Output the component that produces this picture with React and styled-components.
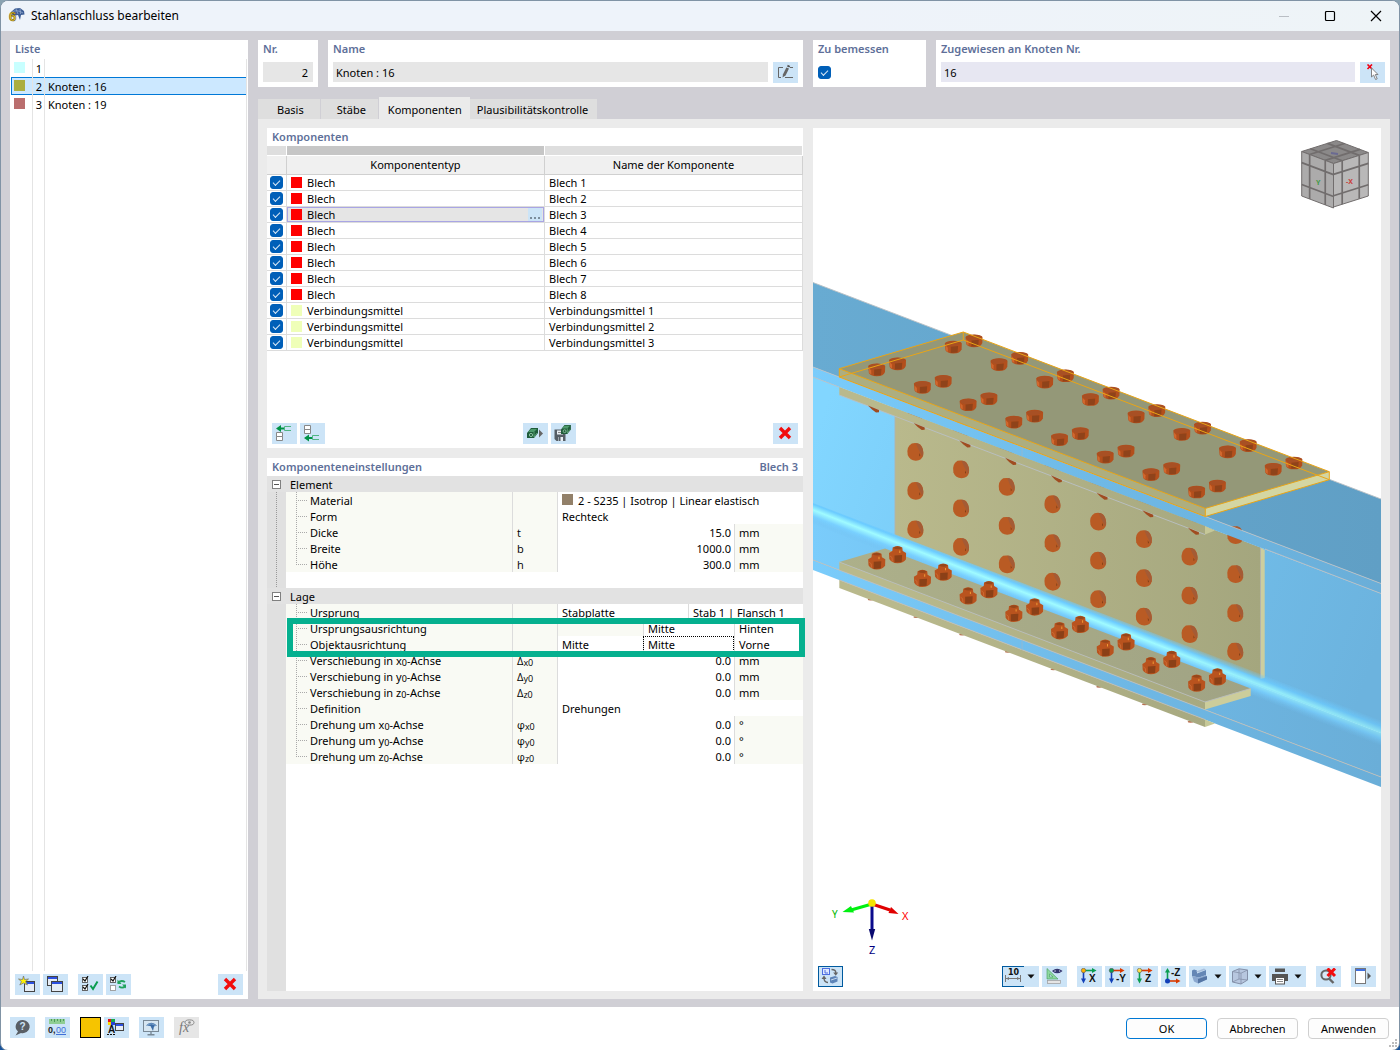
import React from 'react';
import styled, { createGlobalStyle, css } from 'styled-components';

const COMPONENTS = [
  { type: 'Blech', name: 'Blech 1', color: '#ff0000' },
  { type: 'Blech', name: 'Blech 2', color: '#ff0000' },
  { type: 'Blech', name: 'Blech 3', color: '#ff0000' },
  { type: 'Blech', name: 'Blech 4', color: '#ff0000' },
  { type: 'Blech', name: 'Blech 5', color: '#ff0000' },
  { type: 'Blech', name: 'Blech 6', color: '#ff0000' },
  { type: 'Blech', name: 'Blech 7', color: '#ff0000' },
  { type: 'Blech', name: 'Blech 8', color: '#ff0000' },
  { type: 'Verbindungsmittel', name: 'Verbindungsmittel 1', color: '#efffb8' },
  { type: 'Verbindungsmittel', name: 'Verbindungsmittel 2', color: '#efffb8' },
  { type: 'Verbindungsmittel', name: 'Verbindungsmittel 3', color: '#efffb8' },
];

const JOINTS = [
  { nr: 1, name: '', color: '#c8ffff' },
  { nr: 2, name: 'Knoten : 16', color: '#abae40' },
  { nr: 3, name: 'Knoten : 19', color: '#ba6e6e' },
];

const TABS = ['Basis', 'Stäbe', 'Komponenten', 'Plausibilitätskontrolle'];

const BOLTS = [0, 1, 2, 3, 4, 5, 6, 7];

/* ---------- icons ---------- */

const Svg = ({ w = 21, h = 17, children }) => (
  <svg width={w} height={h} viewBox={`0 0 ${w} ${h}`} aria-hidden="true">{children}</svg>
);

const AppIcon = () => (
  <Svg w={17} h={18}>
    <path d="M3 5 L7 1.5 L12 1 L16 4 L16.5 7.5 L13 8 L12 13 L10 8 L5 9 Z" fill="#3d5d96" />
    <path d="M4 5 Q9 2 15 6 M8 2 L10 7 M12 1.5 L12.5 7" stroke="#9fb4d6" strokeWidth="0.7" fill="none" />
    <text x="1" y="14" fontSize="13" fontWeight="bold" fontFamily="Liberation Sans, sans-serif" fill="#f6cf2c" stroke="#6b5b14" strokeWidth="0.6">6</text>
  </Svg>
);

const EditIcon = () => (
  <Svg>
    <path d="M8 3.5 H3.5 V13.5 H6 M10 13.5 H18 M15 3.5 H18" stroke="#666" fill="none" />
    <path d="M7.5 13.5 L8 10.2 L11.4 3.4 L14 4.6 L10.6 11.4 Z" fill="#666" />
    <path d="M12 2.4 L12.8 0.8 L15.2 2 L14.4 3.6 Z" fill="#555" />
  </Svg>
);

const PickIcon = () => (
  <Svg>
    <path d="M5.5 0.5 L10 5 M10 0.5 L5.5 5" stroke="#f00012" strokeWidth="1.6" />
    <path d="M9.5 4 V13 L11.6 11 L13.6 15.5 L15.2 14.8 L13.3 10.5 H16 Z" fill="#fff" stroke="#777" strokeWidth="0.9" />
  </Svg>
);

const InsertIcon = ({ below }) => (
  <Svg>
    {below ? (
      <g>
        <path d="M2.5 0.5 h6 v4 h-6 z M2.5 4.5 h6 v4 h-6 z" fill="#fff" stroke="#888" />
        <path d="M2 13 L7 9.5 V12 H10 V14 H7 V16.5 Z" fill="#009245" />
        <path d="M17 10.5 H10.5 V14.5 H17" fill="none" stroke="#50b583" />
      </g>
    ) : (
      <g>
        <path d="M2.5 7.5 h6 v4 h-6 z M2.5 11.5 h6 v4 h-6 z" fill="#fff" stroke="#888" />
        <path d="M2 3.5 L7 0 V2.5 H10 V4.5 H7 V7 Z" fill="#009245" />
        <path d="M17 1.5 H10.5 V5.5 H17" fill="none" stroke="#50b583" />
      </g>
    )}
  </Svg>
);

const Chip = ({ x, y }) => (
  <g transform={`translate(${x} ${y})`}>
    <path d="M0 6 L4 1 L11 1 L11 6 L7 11 L0 11 Z" fill="#1f5c3a" />
    <path d="M1 5 L4 2 L10 2 L7 5 Z" fill="#4d9a6c" />
    <circle cx="4" cy="8" r="1.6" fill="none" stroke="#a6d8b8" strokeWidth="0.8" />
    <path d="M7 5 V10 L10 6" stroke="#6fb98b" strokeWidth="0.7" fill="none" />
  </g>
);

const LoadIcon = () => (
  <Svg>
    <Chip x={2} y={2} />
    <path d="M14 4.5 L18 8.5 L14 12.5 Z" fill="#666" />
  </Svg>
);

const SaveIcon = () => (
  <Svg>
    <path d="M1.5 4.5 H12.5 V16 H3.5 L1.5 14 Z" fill="#555e66" />
    <path d="M4 5.5 h6 v4 h-6 z" fill="#e8eef4" />
    <path d="M5 7.5 h4" stroke="#888" />
    <path d="M5 12 h5 v4 h-5 z" fill="#e8eef4" />
    <path d="M5.5 12 h2 v4 h-2 z" fill="#555e66" />
    <g transform="translate(8 -1) scale(0.9)"><Chip x={0} y={0} /></g>
  </Svg>
);

const DeleteIcon = () => (
  <Svg>
    <path d="M5 3 L15 13 M15 3 L5 13" stroke="#f20d0d" strokeWidth="3.4" />
  </Svg>
);

const MiniWindow = ({ x, y, w = 10, h = 9 }) => (
  <g>
    <rect x={x + 0.5} y={y + 0.5} width={w} height={h} fill="#e6edf5" stroke="#444" />
    <rect x={x + 1} y={y + 1} width={w - 1} height="2" fill="#2c50e0" />
  </g>
);

const NewIcon = () => (
  <Svg>
    <MiniWindow x={7} y={5} w={10} h={10} />
    <path d="M6.5 0 L7.5 3.5 L11.5 3 L8.6 5.5 L10.5 9 L6.5 7 L2.8 9 L4.4 5.5 L1.5 3 L5.5 3.5 Z" fill="#fff200" stroke="#777" strokeWidth="0.8" />
  </Svg>
);

const CopyIcon = () => (
  <Svg>
    <MiniWindow x={2} y={0} w={10} h={9} />
    <MiniWindow x={6} y={5} w={11} h={10} />
  </Svg>
);

const TickBox = ({ y, on = true }) => (
  <g>
    <rect x="2.5" y={y + 0.5} width="5" height="5" fill="#fff" stroke={on ? '#555' : '#999'} strokeWidth="0.9" />
    {on && <path d={`M3 ${y + 2} l2 2 l3 -5`} stroke="#111" fill="none" strokeWidth="1.2" />}
  </g>
);

const CheckAllIcon = () => (
  <Svg>
    <TickBox y={1} />
    <TickBox y={9} />
    <path d="M10.5 9.5 L13 13 L17.5 5.5" fill="none" stroke="#0a9d50" strokeWidth="2" />
  </Svg>
);

const CheckInvertIcon = () => (
  <Svg>
    <TickBox y={1} />
    <TickBox y={9} on={false} />
    <path d="M10 7 Q13 3.5 17 6 M17.5 10 Q14.5 13 11 10.5" fill="none" stroke="#1fa35c" strokeWidth="1.8" />
    <path d="M9.5 3.5 V8 H13.5 Z M18 12.5 V8.5 H14 Z" fill="#1fa35c" />
  </Svg>
);

const HelpIcon = () => (
  <Svg>
    <path d="M11 1 A7 6.6 0 1 1 9 14 L3.5 16.5 L6 12.5 A7 6.6 0 0 1 11 1 Z" fill="#595f66" />
    <text x="7.6" y="11.4" fontSize="10" fontWeight="bold" fontFamily="Liberation Sans, sans-serif" fill="#cce4f7">?</text>
  </Svg>
);

const DigitsIcon = () => (
  <Svg>
    <rect x="2" y="0" width="16" height="5" fill="#8fce93" />
    <path d="M4.5 0 v2 M7.5 0 v3 M10.5 0 v2 M13.5 0 v3 M16.5 0 v2" stroke="#3d8f4a" strokeWidth="0.8" />
    <text x="1" y="14" fontSize="9" fontWeight="bold" fontFamily="Liberation Sans, sans-serif" fill="#222">0,</text>
    <text x="9" y="14" fontSize="9" fontFamily="Liberation Sans, sans-serif" fill="#3f6fd8">00</text>
    <path d="M9 15.5 h10" stroke="#3f6fd8" />
  </Svg>
);

const DisplayIcon = () => (
  <Svg>
    <rect x="2" y="0" width="3" height="3" fill="#e3131b" />
    <rect x="5" y="0" width="4" height="3" fill="#19a84a" />
    <rect x="2" y="3" width="3" height="3" fill="#ffd900" />
    <rect x="5" y="3" width="4" height="3" fill="#2740d8" />
    <text x="2" y="14" fontSize="10" fontWeight="bold" fontFamily="Liberation Sans, sans-serif" fill="#111">A</text>
    <path d="M1 15.5 h9" stroke="#111" strokeDasharray="2 1" />
    <MiniWindow x={9} y={4} w={8} h={7} />
  </Svg>
);

const MonitorIcon = () => (
  <Svg>
    <rect x="2.5" y="1.5" width="15" height="11" fill="#d6e6f2" stroke="#788896" />
    <path d="M5 6.5 Q10 1 16 6.5 L13 7.5 L12 12 L9.5 7 Z" fill="#3c6ca6" />
    <path d="M6 6.5 Q10.5 3 15 7" stroke="#9cc0e0" strokeWidth="0.7" fill="none" />
    <path d="M10 13 v2.5 M6.5 15.8 h7" stroke="#788896" strokeWidth="1.4" />
  </Svg>
);

const FxIcon = () => (
  <Svg>
    <text x="3" y="13" fontSize="14" fontStyle="italic" fontFamily="Liberation Serif, serif" fill="#777">fx</text>
    <ellipse cx="13.5" cy="3.5" rx="4.5" ry="2.6" fill="none" stroke="#888" />
    <circle cx="13.5" cy="3.5" r="1.3" fill="#888" />
  </Svg>
);

const SyncViewIcon = () => (
  <Svg>
    <rect x="2.5" y="0.5" width="7" height="6" fill="#dfe9ff" stroke="#4d6fe0" />
    <path d="M5 2 v3 h3" stroke="#4d6fe0" fill="none" />
    <path d="M11.5 1.5 Q16 1.5 15.8 5 M4 10 Q4 14.5 8 14.5" stroke="#666" fill="none" strokeWidth="1.4" />
    <path d="M13.2 4.5 h5 l-2.5 3.2 z M1.5 11 h5 l-2.5 -3.4 z" fill="#666" />
    <path d="M10 9.5 l5 -1.5 l2.5 1 v4.5 l-5 2 l-2.5 -1 z" fill="#5d84b8" />
    <path d="M11 12 l6 -2" stroke="#c3d7ee" />
  </Svg>
);

const DimensionIcon = () => (
  <Svg>
    <text x="5" y="7" fontSize="8" fontWeight="bold" fontFamily="DejaVu Sans, sans-serif" fill="#111">10</text>
    <path d="M2.5 7 v7 M17.5 7 v7 M3 10.5 h14" stroke="#777" />
    <path d="M3 10.5 l3 -1.6 v3.2 z M17 10.5 l-3 -1.6 v3.2 z" fill="#777" />
  </Svg>
);

const RulerEyeIcon = () => (
  <Svg>
    <path d="M3 0.5 L14 11 H3 Z M5.5 6 V9 H9 Z" fill="#8fd8a0" fillRule="evenodd" stroke="#3f9b5b" strokeWidth="0.6" />
    <rect x="3.5" y="12.5" width="13" height="3" fill="#e5e5e5" stroke="#999" strokeWidth="0.7" />
    <path d="M9 3 Q13 -0.5 17.5 3 Q13 6.5 9 3 Z" fill="#fff" stroke="#33346e" strokeWidth="1.2" />
    <circle cx="13.3" cy="3" r="2" fill="#33346e" />
  </Svg>
);

const AxisIcon = ({ label, dot, right, down, up }) => (
  <Svg>
    {up ? (
      <g>
        <path d="M4.5 12 V4" stroke="#0a9d50" strokeWidth="1.6" />
        <path d="M2 4.5 L4.5 0 L7 4.5 Z" fill="#0a9d50" />
        <path d="M5 13 H14" stroke="#d93a00" strokeWidth="1.6" />
        <path d="M13 10.5 L17.5 13 L13 15.5 Z" fill="#d93a00" />
        <circle cx="4.5" cy="13" r="2.5" fill={dot} />
        <text x="8" y="8" fontSize="10" fontWeight="bold" fontFamily="Liberation Sans, sans-serif" fill="#111">{label}</text>
      </g>
    ) : (
      <g>
        <path d="M5 2.5 H14" stroke={right} strokeWidth="1.6" />
        <path d="M13 0 L17.5 2.5 L13 5 Z" fill={right} />
        <path d="M4.5 4 V12" stroke={down} strokeWidth="1.6" />
        <path d="M2 10.5 L4.5 15.5 L7 10.5 Z" fill={down} />
        <circle cx="4.5" cy="2.5" r="2.2" fill={dot} stroke="#555" strokeWidth="0.6" />
        <text x={label.length > 1 ? 9 : 10} y="14" fontSize="10" fontWeight="bold" fontFamily="Liberation Sans, sans-serif" fill="#111">{label}</text>
      </g>
    )}
  </Svg>
);

const SolidIcon = () => (
  <Svg w={18}>
    <path d="M1 2.5 L3 1.5 L6 2.5 V5.5 L15 2 V7 L8 9.5 L1 8 Z" fill="#6487b5" />
    <path d="M5 3.5 L13 0.5 L15 1.5 L7 4.5 Z" fill="#a8bfdc" />
    <path d="M1 8 L8 9.5 L15 7 L16 11 L7 15.5 L3 13.5 Z" fill="#8ba8cf" />
    <path d="M7 11 L16 8 V11.5 L7 15.5 Z" fill="#5576a5" />
  </Svg>
);

const WireCubeIcon = () => (
  <Svg w={18}>
    <path d="M1.5 3.5 L8 0.8 L16.5 2 V12 L10 16 L1.5 14 Z" fill="#b7c7df" stroke="#8490a8" />
    <path d="M1.5 3.5 L10 5.2 L16.5 2 M10 5.2 V16 M8 1 V11 L1.5 14 M8 11 L16.5 12" stroke="#8490a8" fill="none" strokeWidth="0.8" />
  </Svg>
);

const PrinterIcon = () => (
  <Svg w={18}>
    <path d="M4 0.5 h10 v3.5 h-10 z M1 6 h16 v7 h-3 v-3 h-10 v3 h-3 z" fill="#555" />
    <rect x="4.5" y="9.5" width="9" height="6.5" fill="#fff" stroke="#555" />
    <path d="M6 11.5 h6 M6 13.5 h6" stroke="#888" />
  </Svg>
);

const ZoomResetIcon = () => (
  <Svg>
    <circle cx="8" cy="7" r="4.6" fill="#d6e8f7" stroke="#666" strokeWidth="2" />
    <path d="M11 10.5 L15.5 15" stroke="#666" strokeWidth="2.4" />
    <path d="M9.5 0.5 L17 8 M17 0.5 L9.5 8" stroke="#f20d0d" strokeWidth="3" />
  </Svg>
);

const PanelIcon = () => (
  <Svg>
    <rect x="2.5" y="0.5" width="10" height="15" fill="#fff" stroke="#777" />
    <rect x="3" y="1" width="9" height="2" fill="#3f6fe0" />
    <path d="M14.5 4.5 L18 8 L14.5 11.5 Z" fill="#555" />
  </Svg>
);

const Caret = () => (
  <Svg w={8} h={5}><path d="M0.5 0.5 H7.5 L4 4.5 Z" fill="#111" /></Svg>
);

const Grip = () => (
  <Svg w={10} h={10}>
    <path d="M7 0 h2 v2 h-2 z M4 3 h2 v2 h-2 z M7 3 h2 v2 h-2 z M1 6 h2 v2 h-2 z M4 6 h2 v2 h-2 z M7 6 h2 v2 h-2 z" fill="#bcbcbc" />
  </Svg>
);

/* ---------- 3D view ---------- */

const TopBolt = ({ x, y }) => (
  <g transform={`translate(${x} ${y})`}>
    <path d="M-8.5 -4 Q-7 -6.5 0 -6.5 Q7 -6.5 8.5 -4 L8.3 2 Q7 6.2 0 6.2 Q-6.5 6 -7.8 3 Z" fill="#b34f1c" />
    <path d="M-8 -4 Q0 -8 8 -4.5 Q4 -1 -2 -0.5 Q-7 -1 -8 -4 Z" fill="#a85024" />
    <path d="M-2.5 -0.5 L4.8 -1.2 L4.2 5.2 L-2.6 5.6 Z" fill="#8f431a" />
    <path d="M-7.8 -2 L-5.5 0.5 L-5.4 4.6 L-7.6 3 Z" fill="#d2682e" />
  </g>
);

const WebBolt = ({ x, y }) => (
  <g transform={`translate(${x} ${y})`}>
    <path d="M-3.5 -8.6 Q2 -9.8 5 -7.4 Q8.6 -3 8 3 Q6.8 8.6 0.5 8.8 Q-5.5 8.6 -7.6 3 Q-9.2 -5.5 -3.5 -8.6 Z" fill="#b95b24" />
    <path d="M0.5 -8.8 Q5 -9 7 -4 Q9 1 6.8 5 Q6 2 3 -3 Z" fill="#a45b35" />
    <path d="M4 1 L5 3.2 L4.2 4.4 Z" fill="#6e3716" />
  </g>
);

const NutBolt = ({ x, y }) => (
  <g transform={`translate(${x} ${y})`}>
    <path d="M-8.5 -2 L-5.2 -4 L-4.8 -7.5 Q0 -10.5 4.8 -7.5 L5.2 -4 L8.6 -2 L8.4 4.5 Q6 8 0 8.3 Q-6 8 -8.2 4 Z" fill="#b9531e" />
    <path d="M-3 0.5 L4.6 0 L4.2 7 L-3 7.6 Z" fill="#8b4017" />
    <path d="M-4.4 -7 Q0 -9.8 4.4 -7 Q1 -4.5 -4.4 -7 Z" fill="#96471b" />
    <path d="M1.8 -4.5 h1 v2.4 h-1 z" fill="#f09a35" />
    <path d="M-7.5 1 L-5.5 2.5 L-5.2 6.4" stroke="#d06f37" strokeWidth="0.8" fill="none" />
  </g>
);

const step = (x, y, i) => ({ x: x + 45.7 * i, y: y + 17.45 * i });

// point on a parallelogram face, u and v run from 0 to 1
const facePoint = (o, a, b, u, v) => [
  o[0] + (a[0] - o[0]) * u + (b[0] - o[0]) * v,
  o[1] + (a[1] - o[1]) * u + (b[1] - o[1]) * v,
];

const CubeFace = ({ o, a, b, fill }) => {
  const cuts = [0.25, 0.74];
  const far = [a[0] + b[0] - o[0], a[1] + b[1] - o[1]];
  const lines = cuts.map((c) => {
    const p = [...facePoint(o, a, b, c, 0), ...facePoint(o, a, b, c, 1)];
    const q = [...facePoint(o, a, b, 0, c), ...facePoint(o, a, b, 1, c)];
    return `M${p[0]} ${p[1]} L${p[2]} ${p[3]} M${q[0]} ${q[1]} L${q[2]} ${q[3]}`;
  });
  return (
    <g stroke="#716d6d" strokeLinejoin="round">
      <polygon points={`${o} ${a} ${far} ${b}`} fill={fill} strokeWidth="1" />
      <path d={lines.join(' ')} strokeWidth="1.7" />
    </g>
  );
};

const ViewCube = () => (
  <g>
    <CubeFace o={[1301.7, 151.5]} a={[1336.5, 140.5]} b={[1333.5, 163.5]} fill="#8b8989" />
    <CubeFace o={[1301.7, 151.5]} a={[1333.5, 163.5]} b={[1301.7, 196]} fill="#acabab" />
    <CubeFace o={[1333.5, 163.5]} a={[1368.3, 152.5]} b={[1333.5, 207]} fill="#b9b8b8" />
    <path d="M1331 153 L1338 154" stroke="#5d5d96" strokeWidth="2" opacity="0.7" />
    <text x="1316" y="185" fontSize="7" fontWeight="bold" fill="#3f9a48">Y</text>
    <text x="1346" y="184" fontSize="7" fontWeight="bold" fill="#c9403b">-X</text>
  </g>
);

const Axes = () => (
  <g>
    <path d="M872 904 L851 910" stroke="#00f010" strokeWidth="3" />
    <path d="M842.5 912 L851 906 L854 912.5 Z" fill="#00f010" />
    <path d="M872 904 L890 910" stroke="#e00000" strokeWidth="3" />
    <path d="M898.5 914 L891 907 L888.5 913 Z" fill="#e00000" />
    <path d="M872 904 V930" stroke="#0a0a8c" strokeWidth="3" />
    <path d="M872 940.5 L868.8 929 H875.2 Z" fill="#0a0a70" />
    <circle cx="872" cy="903" r="3.8" fill="#f5e400" />
    <text x="832" y="918" fontSize="10" fill="#00b800">Y</text>
    <text x="902" y="920" fontSize="11" fill="#ff0000">X</text>
    <text x="869" y="954" fontSize="11" fill="#000080">Z</text>
  </g>
);

const Scene = () => (
  <svg viewBox="813 128 568 835" preserveAspectRatio="xMidYMid slice" role="img" aria-label="3D-Ansicht">
    <defs>
      <linearGradient id="web" gradientUnits="userSpaceOnUse" x1="813" y1="440" x2="1381" y2="640">
        <stop offset="0" stopColor="#82d6ff" />
        <stop offset="0.45" stopColor="#74c4f1" />
        <stop offset="1" stopColor="#6cb3de" />
      </linearGradient>
      <linearGradient id="edge" gradientUnits="userSpaceOnUse" x1="813" y1="0" x2="1381" y2="0">
        <stop offset="0" stopColor="#7accfb" />
        <stop offset="0.5" stopColor="#6fb9e6" />
        <stop offset="1" stopColor="#6aaed8" />
      </linearGradient>
      <linearGradient id="top" gradientUnits="userSpaceOnUse" x1="813" y1="0" x2="1381" y2="0">
        <stop offset="0" stopColor="#68abd2" />
        <stop offset="1" stopColor="#609fc5" />
      </linearGradient>
      <linearGradient id="plate" gradientUnits="userSpaceOnUse" x1="895" y1="0" x2="1262" y2="0">
        <stop offset="0" stopColor="#b9b98c" />
        <stop offset="1" stopColor="#a4a67e" />
      </linearGradient>
      <linearGradient id="lowerPlate" gradientUnits="userSpaceOnUse" x1="839" y1="0" x2="1250" y2="0">
        <stop offset="0" stopColor="#adb08a" />
        <stop offset="1" stopColor="#a0a384" />
      </linearGradient>
      <linearGradient id="glow" gradientUnits="userSpaceOnUse" x1="1100" y1="610" x2="1091" y2="633">
        <stop offset="0" stopColor="#72c9fb" stopOpacity="0" />
        <stop offset="0.24" stopColor="#6bcbff" />
        <stop offset="0.46" stopColor="#a0fbff" />
        <stop offset="0.7" stopColor="#79d0ff" />
        <stop offset="1" stopColor="#73c0f0" stopOpacity="0" />
      </linearGradient>
      <linearGradient id="fade" gradientUnits="userSpaceOnUse" x1="1150" y1="0" x2="1381" y2="0">
        <stop offset="0" stopColor="#fff" />
        <stop offset="1" stopColor="#999" />
      </linearGradient>
      <mask id="glowFade" maskUnits="userSpaceOnUse" x="813" y="480" width="568" height="300">
        <rect x="813" y="480" width="568" height="300" fill="url(#fade)" />
      </mask>
    </defs>

    {/* beam */}
    <polygon points="813,282.5 1381,499 1381,583.5 813,367" fill="url(#top)" />
    <polygon points="813,377 1381,593.5 1381,733 813,516" fill="url(#web)" />
    <polygon points="813,516 1381,733 1381,777 813,560" fill="url(#edge)" />
    <polygon points="813,560 1381,777 1381,787 813,570" fill="url(#edge)" />

    {/* web plate with its bolts */}
    <polygon points="895,408 1260.5,547.5 1260.5,679 895,540" fill="url(#plate)" />
    <polygon points="1260.5,547.5 1264.7,550 1264.7,678 1260.5,679" fill="#cdce9f" />
    <path d="M895 410 V540 M1260.5 548 V679" stroke="#b3b3ac" strokeWidth="0.9" />
    {BOLTS.map((i) => (
      <g key={i}>
        <WebBolt {...step(915.3, 413, i)} />
        <WebBolt {...step(915.3, 452, i)} />
        <WebBolt {...step(915.3, 491, i)} />
        <WebBolt {...step(915.3, 529.5, i)} />
      </g>
    ))}

    <polygon points="813,503 1381,720 1381,748 813,531" fill="url(#glow)" mask="url(#glowFade)" />

    {/* flange edge and the plate below it */}
    <polygon points="813,367 1381,583.5 1381,593.5 813,377" fill="url(#edge)" />
    <polygon points="839.3,387 1205,526 1205,534.5 839.3,395" fill="url(#plate)" />
    <polygon points="1205,526 1215,530.5 1205,534.5" fill="#c6c898" />
    <path d="M813 367 L1381 583.5 M813 377 L839 387 M1265 549 L1381 593.5 M839.3 395 L1205 534.5 M813 282.5 L1381 499" stroke="#b9bfc4" strokeWidth="0.9" fill="none" />
    {BOLTS.map((i) => {
      const p = step(874, 409, i);
      return <path key={i} d={`M${p.x - 6} ${p.y - 3.5} l11 4.6 l0 2.2 l-3 0.3 l-4 -3 z`} fill="#a04c20" />;
    })}

    {/* lower flange plates */}
    {BOLTS.map((i) => {
      const p = step(870.7, 599.5, i);
      return <ellipse key={i} cx={p.x} cy={p.y} rx="3" ry="1" fill="#b97152" />;
    })}
    <polygon points="839.3,580 1205,719.5 1205,727 839.3,588" fill="url(#plate)" />
    <polygon points="1205,719.5 1215,723.5 1205,727" fill="#c6c898" />
    <polygon points="839.3,562 885,548.5 1250.7,688.5 1205,702" fill="url(#lowerPlate)" />
    <polygon points="839.3,562 1205,702 1205,709.5 839.3,570" fill="url(#plate)" />
    <polygon points="1205,702 1250.7,688.5 1250.7,696 1205,709.5" fill="#cccd9b" />
    <path d="M839.3 562 L1205 702 L1250.7 688.5 M813 560 L1381 777 M839.3 580 L1205 719.5" stroke="#bdbdb8" strokeWidth="0.9" fill="none" />
    <path d="M1022 447 V456 M1022 640 V650" stroke="#8fb9d4" />
    {BOLTS.map((i) => (
      <g key={i}>
        <NutBolt {...step(897.5, 555, i)} />
        <NutBolt {...step(876.7, 561.3, i)} />
      </g>
    ))}

    {/* selected top plate */}
    <polygon points="963.3,332 1329.3,471.7 1205.3,508.4 839.3,368.7" fill="#949878" />
    <polygon points="839.3,368.7 1205.3,508.4 1205.3,516.5 839.3,377" fill="#adae80" />
    <polygon points="1205.3,508.4 1329.3,471.7 1329.3,479.7 1205.3,516.5" fill="#d4d6a2" />
    {BOLTS.map((i) => (
      <g key={i}>
        <TopBolt {...step(974, 341, i)} />
        <TopBolt {...step(953.3, 347.3, i)} />
        <TopBolt {...step(897.5, 364, i)} />
        <TopBolt {...step(876.7, 370, i)} />
      </g>
    ))}
    <path
      d="M963.3 332 L1329.3 471.7 L1205.3 508.4 L839.3 368.7 Z M839.3 368.7 V377 L1205.3 516.5 V508.4 M1205.3 516.5 L1329.3 479.7 V471.7 M839.3 377 L963.3 340 L1329.3 479.7 M963.3 332 V340"
      fill="none"
      stroke="#eaa515"
    />

    <ViewCube />
    <Axes />
  </svg>
);

/* ---------- settings rows ---------- */

const PropertyRow = ({ label, symbol, value, unit, numeric, last, children }) => (
  <Property>
    <PropertyLabel $last={last}>{label}</PropertyLabel>
    <Symbol>{symbol}</Symbol>
    {children || (
      <>
        <Value $numeric={numeric}>{value}</Value>
        {numeric && <Unit>{unit}</Unit>}
      </>
    )}
  </Property>
);

const axisLabel = (text, axis) => <span>{text} {axis}<Sub>0</Sub>-Achse</span>;
const axisSymbol = (letter, axis) => <span>{letter}<Sub>{axis}0</Sub></span>;

function App() {
  const [checked, setChecked] = React.useState(COMPONENTS.map(() => true));
  const [tab, setTab] = React.useState(2);
  const [design, setDesign] = React.useState(true);

  const toggle = (index) => {
    setChecked((prev) => prev.map((c, i) => (i === index ? !c : c)));
  };

  return (
    <Desktop>
      <GlobalStyle />
      <Dialog>
        <TitleBar>
          <AppIcon />
          <Title>Stahlanschluss bearbeiten</Title>
          <WindowButton aria-label="Minimieren"><Svg w={12} h={12}><path d="M1 6.5 H11" stroke="#b9bec4" /></Svg></WindowButton>
          <WindowButton aria-label="Maximieren"><Svg w={12} h={12}><rect x="1.5" y="1.5" width="9" height="9" rx="1" fill="none" stroke="#000" strokeWidth="1.2" /></Svg></WindowButton>
          <WindowButton aria-label="Schließen"><Svg w={12} h={12}><path d="M1 1 L11 11 M11 1 L1 11" stroke="#000" strokeWidth="1.2" /></Svg></WindowButton>
        </TitleBar>

        <Body>
          <ListPanel>
            <PanelTitle>Liste</PanelTitle>
            <List>
              {JOINTS.map((j) => (
                <ListRow key={j.nr} $selected={j.nr === 2}>
                  <ListCell><Swatch $color={j.color} /></ListCell>
                  <ListCell $right>{j.nr}</ListCell>
                  <ListCell>{j.name}</ListCell>
                </ListRow>
              ))}
              <ListRow $fill aria-hidden="true"><ListCell /><ListCell /><ListCell /></ListRow>
            </List>
            <Toolbar>
              <IconButton aria-label="Neu"><NewIcon /></IconButton>
              <IconButton aria-label="Kopieren"><CopyIcon /></IconButton>
              <Gap />
              <IconButton aria-label="Alle auswählen"><CheckAllIcon /></IconButton>
              <IconButton aria-label="Auswahl umkehren"><CheckInvertIcon /></IconButton>
              <Spacer />
              <IconButton aria-label="Löschen"><DeleteIcon /></IconButton>
            </Toolbar>
          </ListPanel>

          <Main>
            <Header>
              <HeaderLeft>
                <Field $width="60px">
                  <PanelTitle as="label" htmlFor="nr">Nr.</PanelTitle>
                  <FieldRow><TextInput id="nr" defaultValue="2" readOnly $right /></FieldRow>
                </Field>
                <Field>
                  <PanelTitle as="label" htmlFor="name">Name</PanelTitle>
                  <FieldRow>
                    <TextInput id="name" defaultValue="Knoten : 16" readOnly />
                    <IconButton aria-label="Name bearbeiten"><EditIcon /></IconButton>
                  </FieldRow>
                </Field>
              </HeaderLeft>
              <Field $width="113px">
                <PanelTitle as="label" htmlFor="design">Zu bemessen</PanelTitle>
                <FieldRow>
                  <Checkbox id="design" type="checkbox" checked={design} onChange={() => setDesign(!design)} />
                </FieldRow>
              </Field>
              <Field>
                <PanelTitle as="label" htmlFor="nodes">Zugewiesen an Knoten Nr.</PanelTitle>
                <FieldRow>
                  <TextInput id="nodes" defaultValue="16" $active />
                  <IconButton aria-label="Knoten auswählen"><PickIcon /></IconButton>
                </FieldRow>
              </Field>
            </Header>

            <Tabs role="tablist">
              {TABS.map((t, i) => (
                <Tab key={t} role="tab" aria-selected={tab === i} $active={tab === i} onClick={() => setTab(i)}>{t}</Tab>
              ))}
            </Tabs>

            <Page>
              <LeftColumn>
                <ComponentsPanel>
                  <PanelTitle>Komponenten</PanelTitle>
                  <Table>
                    <colgroup>
                      <col width="20" />
                      <col />
                      <col />
                    </colgroup>
                    <thead>
                      <StripRow><th /><Strip $dark /><th /></StripRow>
                      <HeadRow>
                        <th aria-label="Aktiv" />
                        <th>Komponententyp</th>
                        <th>Name der Komponente</th>
                      </HeadRow>
                    </thead>
                    <tbody>
                      {COMPONENTS.map((c, i) => (
                        <tr key={c.name}>
                          <td>
                            <Checkbox type="checkbox" aria-label={c.name} checked={checked[i]} onChange={() => toggle(i)} />
                          </td>
                          <td>
                            <TypeCell $selected={i === 2}>
                              <Swatch $color={c.color} />
                              <span>{c.type}</span>
                              {i === 2 && (
                                <MoreButton aria-label="Mehr">
                                  <Svg w={11} h={3}><path d="M0 0 h2 v2 h-2 z M4 0 h2 v2 h-2 z M8 0 h2 v2 h-2 z" fill="#7b8d9c" /></Svg>
                                </MoreButton>
                              )}
                            </TypeCell>
                          </td>
                          <td><NameCell>{c.name}</NameCell></td>
                        </tr>
                      ))}
                    </tbody>
                  </Table>
                  <Spacer />
                  <Toolbar>
                    <IconButton aria-label="Darüber einfügen"><InsertIcon /></IconButton>
                    <IconButton aria-label="Darunter einfügen"><InsertIcon below /></IconButton>
                    <Spacer />
                    <IconButton aria-label="Laden"><LoadIcon /></IconButton>
                    <IconButton aria-label="Speichern"><SaveIcon /></IconButton>
                    <RightSlot><IconButton aria-label="Löschen"><DeleteIcon /></IconButton></RightSlot>
                  </Toolbar>
                </ComponentsPanel>

                <SettingsPanel>
                  <SettingsTitle>
                    <PanelTitle>Komponenteneinstellungen</PanelTitle>
                    <PanelTitle>Blech 3</PanelTitle>
                  </SettingsTitle>

                  <Category><Expander aria-label="Einklappen" /><span>Element</span></Category>
                  <Group $line>
                    <PropertyRow label="Material" value={<><Swatch $color="#928069" /><span>2 - S235 | Isotrop | Linear elastisch</span></>} />
                    <PropertyRow label="Form" value="Rechteck" />
                    <PropertyRow label="Dicke" symbol="t" value="15.0" unit="mm" numeric />
                    <PropertyRow label="Breite" symbol="b" value="1000.0" unit="mm" numeric />
                    <PropertyRow label="Höhe" symbol="h" value="300.0" unit="mm" numeric last />
                  </Group>

                  <Category><Expander aria-label="Einklappen" /><span>Lage</span></Category>
                  <Group $grow>
                    <PropertyRow label="Ursprung">
                      <Value>Stabplatte</Value>
                      <Extra $width="115px">Stab 1 | Flansch 1</Extra>
                    </PropertyRow>
                    <Highlighted>
                      <PropertyRow label="Ursprungsausrichtung">
                        <Value $disabled />
                        <Extra $width="91px">Mitte</Extra>
                        <Extra $width="69px">Hinten</Extra>
                      </PropertyRow>
                      <PropertyRow label="Objektausrichtung">
                        <Value>Mitte</Value>
                        <Extra $width="91px" $focused>Mitte</Extra>
                        <Extra $width="69px">Vorne</Extra>
                      </PropertyRow>
                      <HighlightFrame />
                    </Highlighted>
                    <PropertyRow label={axisLabel('Verschiebung in', 'x')} symbol={axisSymbol('Δ', 'x')} value="0.0" unit="mm" numeric />
                    <PropertyRow label={axisLabel('Verschiebung in', 'y')} symbol={axisSymbol('Δ', 'y')} value="0.0" unit="mm" numeric />
                    <PropertyRow label={axisLabel('Verschiebung in', 'z')} symbol={axisSymbol('Δ', 'z')} value="0.0" unit="mm" numeric />
                    <PropertyRow label="Definition" value="Drehungen" />
                    <PropertyRow label={axisLabel('Drehung um', 'x')} symbol={axisSymbol('φ', 'x')} value="0.0" unit="°" numeric />
                    <PropertyRow label={axisLabel('Drehung um', 'y')} symbol={axisSymbol('φ', 'y')} value="0.0" unit="°" numeric />
                    <PropertyRow label={axisLabel('Drehung um', 'z')} symbol={axisSymbol('φ', 'z')} value="0.0" unit="°" numeric last />
                  </Group>
                </SettingsPanel>
              </LeftColumn>

              <Viewer>
                <Canvas><Scene /></Canvas>
                <Toolbar>
                  <IconButton aria-label="Ansicht wechseln" $outlined><SyncViewIcon /></IconButton>
                  <Spacer />
                  <SplitButton aria-label="Bemaßung">
                    <Toggled><DimensionIcon /></Toggled>
                    <Caret />
                  </SplitButton>
                  <IconButton aria-label="Maße anzeigen"><RulerEyeIcon /></IconButton>
                  <Gap />
                  <IconButton aria-label="Ansicht X"><AxisIcon label="X" dot="#ffb000" right="#0a9d50" down="#1240b8" /></IconButton>
                  <IconButton aria-label="Ansicht -Y"><AxisIcon label="-Y" dot="#0a9d50" right="#d93a00" down="#1240b8" /></IconButton>
                  <IconButton aria-label="Ansicht Z"><AxisIcon label="Z" dot="#ffe04a" right="#d93a00" down="#0a9d50" /></IconButton>
                  <IconButton aria-label="Ansicht -Z"><AxisIcon label="-Z" dot="#1240b8" up /></IconButton>
                  <SplitButton aria-label="Darstellung"><SolidIcon /><Caret /></SplitButton>
                  <SplitButton aria-label="Ansichten"><WireCubeIcon /><Caret /></SplitButton>
                  <SplitButton aria-label="Drucken"><PrinterIcon /><Caret /></SplitButton>
                  <Gap />
                  <IconButton aria-label="Zoom zurücksetzen"><ZoomResetIcon /></IconButton>
                  <Gap />
                  <IconButton aria-label="Bedienfeld"><PanelIcon /></IconButton>
                </Toolbar>
              </Viewer>
            </Page>
          </Main>
        </Body>

        <Footer>
          <IconButton aria-label="Hilfe"><HelpIcon /></IconButton>
          <Gap />
          <IconButton aria-label="Einheiten"><DigitsIcon /></IconButton>
          <Gap />
          <ColorButton aria-label="Farbe" />
          <IconButton aria-label="Anzeigeeigenschaften"><DisplayIcon /></IconButton>
          <Gap />
          <IconButton aria-label="Grafik"><MonitorIcon /></IconButton>
          <Gap />
          <IconButton aria-label="Formel" disabled><FxIcon /></IconButton>
          <Spacer />
          <DialogActions>
            <DialogButton $primary>OK</DialogButton>
            <DialogButton>Abbrechen</DialogButton>
            <DialogButton>Anwenden</DialogButton>
          </DialogActions>
          <Corner><Grip /></Corner>
        </Footer>
      </Dialog>
    </Desktop>
  );
}

const GlobalStyle = createGlobalStyle`
  * {
    box-sizing: border-box;
  }
  body {
    margin: 0;
    font-family: "Noto Sans", "Open Sans", sans-serif;
    font-size: 11px;
    line-height: 16px;
    color: #000;
  }
  button, input {
    font: inherit;
    color: inherit;
    margin: 0;
    padding: 0;
    border: 0;
    border-radius: 0;
  }
  svg {
    display: block;
    flex: none;
  }
`;

const Desktop = styled.div`
  display: flex;
  min-height: 100vh;
  background: linear-gradient(#8ba3b2, #1b3f86 60%, #17539c);
`;

const Dialog = styled.div`
  flex: 1;
  min-width: 0;
  display: flex;
  flex-direction: column;
  border: 1px solid #8093a5;
  border-radius: 8px;
  overflow: hidden;
  background: #fff;
`;

const TitleBar = styled.header`
  height: 30px;
  display: flex;
  align-items: center;
  padding-left: 7px;
  background: linear-gradient(90deg, #eef3fa 60%, #eef4f7);
`;

const Title = styled.h1`
  flex: 1;
  margin: 0 0 0 6px;
  font-size: 12px;
  font-weight: 400;
`;

const WindowButton = styled.button`
  width: 46px;
  height: 30px;
  display: flex;
  align-items: center;
  justify-content: center;
  background: none;
`;

const Body = styled.div`
  flex: 1;
  display: flex;
  gap: 10px;
  padding: 9px 9px 8px;
  background: #d0cfd5;
`;

const ListPanel = styled.section`
  flex: 0 0 238px;
  display: flex;
  flex-direction: column;
  background: #fff;
`;

const PanelTitle = styled.h2`
  display: block;
  margin: 0;
  padding: 0 5px;
  font-size: 11px;
  line-height: 18px;
  font-weight: 600;
  color: #5e6f99;
`;

const List = styled.ul`
  flex: 1;
  display: flex;
  flex-direction: column;
  margin: 0;
  padding: 1px 1px 0;
  list-style: none;
`;

const ListRow = styled.li`
  display: grid;
  grid-template-columns: 22px 12px 1fr;
  height: 18px;
  ${(p) => p.$fill && css`
    flex: 1;
    height: auto;
  `}
  ${(p) => p.$selected && css`
    background: #cce8ff;
    box-shadow: inset 1px 0 #0078d7, inset 0 1px #0078d7, inset 0 -1px #0078d7;
  `}
`;

const ListCell = styled.span`
  display: flex;
  align-items: center;
  justify-content: ${(p) => (p.$right ? 'flex-end' : 'flex-start')};
  padding: ${(p) => (p.$right ? '1px 2px 0 0' : '1px 0 0 3px')};
  border-right: 1px solid #e4e4e4;
`;

const Swatch = styled.i`
  flex: none;
  width: 11px;
  height: 11px;
  margin-bottom: 2px;
  background: ${(p) => p.$color};
`;

const Toolbar = styled.div`
  display: flex;
  gap: 3px;
  padding: 3px 5px 4px;
`;

const Gap = styled.span`
  width: 4px;
`;

const Spacer = styled.span`
  flex: 1;
`;

const RightSlot = styled.span`
  flex: 1 1 28px;
  display: flex;
  justify-content: flex-end;
`;

const IconButton = styled.button`
  flex: none;
  width: 25px;
  height: 21px;
  display: flex;
  align-items: center;
  justify-content: center;
  background: #cce4f7;
  ${(p) => p.$outlined && css`
    box-shadow: inset 0 0 0 1px #005a9e;
  `}
  &:disabled {
    background: #e6e6e6;
  }
`;

const SplitButton = styled.button`
  flex: none;
  width: 37px;
  height: 21px;
  display: flex;
  align-items: center;
  justify-content: space-between;
  padding: 0 4px 0 2px;
  background: #cce4f7;
`;

const Toggled = styled.span`
  margin-left: -2px;
  padding: 1px 0;
  border: solid #005a9e;
  border-width: 1px 0 1px 1px;
`;

const Main = styled.main`
  flex: 1;
  min-width: 0;
  display: flex;
  flex-direction: column;
`;

const Header = styled.div`
  display: flex;
  gap: 10px;
`;

const HeaderLeft = styled.div`
  flex: 0 1 545px;
  display: flex;
  gap: 10px;
`;

const Field = styled.div`
  flex: ${(p) => (p.$width ? `0 0 ${p.$width}` : '1 1 0')};
  min-width: 0;
  height: 47px;
  background: #fff;
`;

const FieldRow = styled.div`
  display: flex;
  gap: 5px;
  padding: 4px 5px 0;
`;

const TextInput = styled.input`
  flex: 1;
  min-width: 0;
  height: 20px;
  padding: 1px 5px 0 3px;
  text-align: ${(p) => (p.$right ? 'right' : 'left')};
  background: ${(p) => (p.$active ? '#e7e7f2' : '#e6e6e6')};
  outline: none;
`;

const Checkbox = styled.input`
  appearance: none;
  display: block;
  width: 13px;
  height: 13px;
  border-radius: 3px;
  border: 1px solid #868686;
  background: #fff;
  ${FieldRow} & {
    margin-top: 4px;
  }
  &:checked {
    border-color: #005fb8;
    background: #005fb8;
  }
  &:checked::after {
    content: '';
    display: block;
    width: 6px;
    height: 3px;
    margin: 3px 0 0 2px;
    border: solid #d8e8f6;
    border-width: 0 0 1px 1px;
    transform: rotate(-45deg);
  }
`;

const Tabs = styled.div`
  display: flex;
  align-items: flex-end;
  height: 32px;
`;

const Tab = styled.button`
  height: 20px;
  padding: 2px 9px 0 7px;
  background: #dedede;
  border-right: 1px solid #d0cfd5;
  &:nth-child(1) {
    padding: 2px 16px 0 19px;
  }
  &:nth-child(2) {
    padding: 2px 12px 0 16px;
  }
  ${(p) => p.$active && css`
    height: 22px;
    padding: 4px 8px 0 9px;
    background: #ebebeb;
    border-right: 0;
  `}
`;

const Page = styled.div`
  flex: 1;
  display: flex;
  gap: 10px;
  padding: 9px 9px 8px;
  background: #ebebeb;
`;

const LeftColumn = styled.div`
  flex: 0 1 536px;
  min-width: 0;
  display: flex;
  flex-direction: column;
  gap: 10px;
`;

const ComponentsPanel = styled.section`
  display: flex;
  flex-direction: column;
  min-height: 320px;
  background: #fff;
`;

const Table = styled.table`
  width: 100%;
  table-layout: fixed;
  border-collapse: separate;
  border-spacing: 0;
  th {
    font-weight: 400;
    padding: 0;
    border-right: 1px solid #d0d0d0;
  }
  td {
    height: 16px;
    padding: 0;
    border: solid #dcdcdc;
    border-width: 0 1px 1px 0;
  }
  td:first-child {
    padding-left: 3px;
  }
`;

const StripRow = styled.tr`
  th {
    height: 10px;
    background: #dedede;
    border-right: 1px solid #fff;
    border-bottom: 1px solid #fff;
  }
`;

const Strip = styled.th`
  && {
    background: ${(p) => (p.$dark ? '#c6c6c6' : '#dedede')};
  }
`;

const HeadRow = styled.tr`
  th {
    height: 19px;
    background: #f0f0f0;
    border-bottom: 1px solid #d0d0d0;
  }
`;

const TypeCell = styled.div`
  height: 15px;
  display: flex;
  align-items: center;
  gap: 5px;
  padding-left: 4px;
  ${(p) => p.$selected && css`
    background: #e5e5e5;
    box-shadow: inset 0 0 0 1px #a9a5e4;
  `}
  ${Swatch} {
    margin-bottom: 1px;
  }
`;

const MoreButton = styled.button`
  width: 14px;
  height: 13px;
  margin: 0 2px 0 auto;
  display: flex;
  align-items: flex-end;
  justify-content: center;
  padding-bottom: 1px;
  background: #cce4f7;
`;

const NameCell = styled.div`
  height: 15px;
  padding-left: 4px;
`;

const SettingsPanel = styled.section`
  flex: 1;
  display: flex;
  flex-direction: column;
  background: #fff;
`;

const SettingsTitle = styled.div`
  display: flex;
  justify-content: space-between;
`;

const Category = styled.div`
  height: 16px;
  display: flex;
  align-items: center;
  gap: 9px;
  padding: 2px 0 0 5px;
  background: #e2e2e2;
`;

const Expander = styled.button`
  width: 9px;
  height: 9px;
  margin-bottom: 1px;
  border: 1px solid #808080;
  background: linear-gradient(#555, #555) center / 5px 1px no-repeat #fff;
`;

const Group = styled.div`
  flex: ${(p) => (p.$grow ? '1' : 'none')};
  display: flex;
  flex-direction: column;
  padding-left: 19px;
  padding-bottom: ${(p) => (p.$line ? '16px' : '0')};
  background: ${(p) => p.$line && 'repeating-linear-gradient(#999 0 1px, transparent 1px 2px) 9px 0 / 1px 100% no-repeat,'}
    linear-gradient(#e0e0e0, #e0e0e0) 0 0 / 19px 100% no-repeat;
`;

const Property = styled.div`
  height: 16px;
  display: flex;
  line-height: 18px;
`;

const PropertyLabel = styled.div`
  flex: 0 1 227px;
  min-width: 0;
  padding-left: 24px;
  border-right: 1px solid #dcdcdc;
  background:
    repeating-linear-gradient(#aaa 0 1px, transparent 1px 2px) 10px 0 / 1px ${(p) => (p.$last ? '9px' : '16px')} no-repeat,
    repeating-linear-gradient(90deg, #aaa 0 1px, transparent 1px 2px) 12px 8px / 10px 1px no-repeat,
    #f9faf4;
  white-space: nowrap;
`;

const Symbol = styled.div`
  flex: 0 0 45px;
  padding-left: 4px;
  border-right: 1px solid #dcdcdc;
  background: #f9faf4;
  font-family: "Open Sans", "Noto Sans", sans-serif;
`;

const Value = styled.div`
  flex: 1;
  display: flex;
  align-items: flex-start;
  gap: 5px;
  justify-content: ${(p) => (p.$numeric ? 'flex-end' : 'flex-start')};
  padding: 0 3px 0 4px;
  background: ${(p) => (p.$disabled ? '#f9faf4' : '#fff')};
  ${Swatch} {
    margin-top: 2px;
  }
`;

const Unit = styled.div`
  flex: 0 0 69px;
  padding-left: 4px;
  border-left: 1px solid #dcdcdc;
  background: #f9faf4;
`;

const Extra = styled.div`
  flex: 0 0 ${(p) => p.$width};
  padding-left: 4px;
  border-left: 1px solid #dcdcdc;
  white-space: nowrap;
  ${(p) => p.$focused && css`
    outline: 1px dotted #000;
    outline-offset: -1px;
  `}
`;

const Highlighted = styled.div`
  position: relative;
`;

const HighlightFrame = styled.div`
  position: absolute;
  inset: -2px -2px -5px 1px;
  border: 6px solid #05b08f;
`;

const Sub = styled.span`
  position: relative;
  top: 1px;
  font-size: 9px;
`;

const Viewer = styled.section`
  flex: 1;
  min-width: 0;
  display: flex;
  flex-direction: column;
  background: #fff;
`;

const Canvas = styled.div`
  flex: 1;
  display: flex;
  min-height: 400px;
  svg {
    flex: 1;
    width: 100%;
  }
`;

const Footer = styled.footer`
  position: relative;
  display: flex;
  gap: 3px;
  padding: 10px 10px 11px 9px;
`;

const ColorButton = styled.button`
  width: 21px;
  height: 21px;
  border: 1px solid #000;
  background: #f6c400;
`;

const DialogActions = styled.div`
  display: flex;
  gap: 10px;
  padding-top: 1px;
`;

const DialogButton = styled.button`
  width: 81px;
  height: 21px;
  border: 1px solid ${(p) => (p.$primary ? '#0078d4' : '#d0d0d0')};
  border-radius: 4px;
  background: #fdfdfd;
`;

const Corner = styled.span`
  position: absolute;
  right: 1px;
  bottom: 1px;
`;

export default App;
